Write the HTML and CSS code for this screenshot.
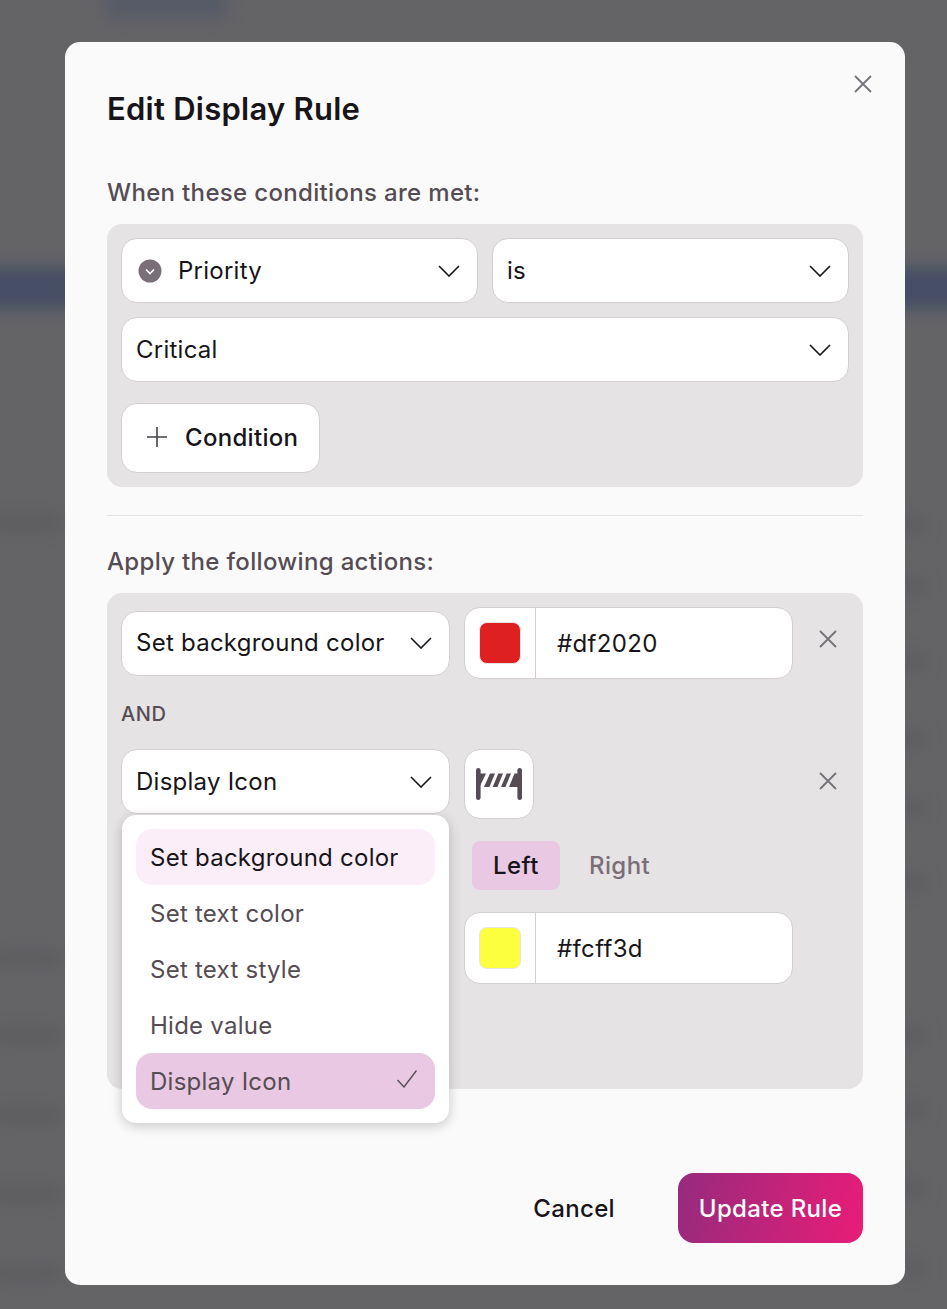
FILE: index.html
```html
<!DOCTYPE html>
<html lang="en">
<head>
<meta charset="utf-8">
<title>Edit Display Rule</title>
<link rel="stylesheet" href="styles.css">
</head>
<body>
<div class="backdrop" aria-hidden="true">
  <span class="blur blur-tab"></span>
  <span class="blur blur-band"></span>
  <span class="blur left y522"></span>
  <span class="blur left y959"></span>
  <span class="blur left y1035"></span>
  <span class="blur left y1115"></span>
  <span class="blur left y1194"></span>
  <span class="blur left y1273"></span>
  <span class="blur right y525"></span>
  <span class="blur right y586"></span>
  <span class="blur right y662"></span>
  <span class="blur right y739"></span>
  <span class="blur right y808"></span>
  <span class="blur right y882"></span>
  <span class="blur right y1035"></span>
  <span class="blur right y1110"></span>
  <span class="blur right y1189"></span>
  <span class="blur right y1268"></span>
</div>
<main class="modal">
  <button class="close" aria-label="Close">
    <svg width="20" height="20" viewBox="0 0 20 20"><path d="M2 2 18 18M18 2 2 18" class="stroke-grey"/></svg>
  </button>
  <h1 class="title">Edit Display Rule</h1>
  <h2 class="label">When these conditions are met:</h2>
  <section class="panel conditions">
    <div class="cond-row">
      <div class="select">
        <svg class="prio" width="24" height="24" viewBox="0 0 24 24"><circle cx="12" cy="12" r="11.5" fill="#7a6e78"/><path d="M8 10.5 12 14.5 16 10.5" fill="none" stroke="#fff" stroke-width="1.6"/></svg>
        <span class="grow">Priority</span>
        <svg class="chev" width="22" height="12" viewBox="0 0 22 12"><path d="M1 1 11 11 21 1"/></svg>
      </div>
      <div class="select">
        <span class="grow">is</span>
        <svg class="chev" width="22" height="12" viewBox="0 0 22 12"><path d="M1 1 11 11 21 1"/></svg>
      </div>
    </div>
    <div class="select">
      <span class="grow">Critical</span>
      <svg class="chev" width="22" height="12" viewBox="0 0 22 12"><path d="M1 1 11 11 21 1"/></svg>
    </div>
    <button class="add">
      <svg width="20" height="20" viewBox="0 0 20 20"><path d="M10 0V20M0 10H20" fill="none" stroke="#45404a" stroke-width="1.6"/></svg>
      <span>Condition</span>
    </button>
  </section>
  <hr class="rule">
  <h2 class="label">Apply the following actions:</h2>
  <section class="panel actions">
    <div class="action-row row-first">
      <div class="select">
        <span class="grow">Set background color</span>
        <svg class="chev" width="22" height="12" viewBox="0 0 22 12"><path d="M1 1 11 11 21 1"/></svg>
      </div>
      <div class="color-field">
        <span class="swatch-cell"><span class="swatch swatch-red"></span></span>
        <span class="hex">#df2020</span>
      </div>
      <button class="remove" aria-label="Remove">
        <svg width="18" height="18" viewBox="0 0 18 18"><path d="M1 1 17 17M17 1 1 17" class="stroke-grey"/></svg>
      </button>
    </div>
    <div class="and">AND</div>
    <div class="action-row row-second">
      <div class="select">
        <span class="grow">Display Icon</span>
        <svg class="chev" width="22" height="12" viewBox="0 0 22 12"><path d="M1 1 11 11 21 1"/></svg>
      </div>
      <button class="icon-btn" aria-label="Icon">
        <svg width="46" height="32" viewBox="0 0 46 32">
          <g fill="#554c54">
            <rect x="0" y="0" width="4.6" height="32" rx="2.3"/>
            <rect x="41.4" y="0" width="4.6" height="32" rx="2.3"/>
            <path d="M4 5.5H10L4 18Z"/>
            <path d="M14 5.5H19L13.4 19H8Z"/>
            <path d="M22.3 5.5H27L21.4 19H16.7Z"/>
            <path d="M30.7 5.5H35L29.4 19H25Z"/>
            <path d="M38.5 5.5H42V19H33Z"/>
          </g>
        </svg>
      </button>
      <button class="remove" aria-label="Remove">
        <svg width="18" height="18" viewBox="0 0 18 18"><path d="M1 1 17 17M17 1 1 17" class="stroke-grey"/></svg>
      </button>
    </div>
    <div class="segments">
      <span class="seg seg-on">Left</span>
      <span class="seg">Right</span>
    </div>
    <div class="color-field field-yellow">
      <span class="swatch-cell"><span class="swatch swatch-yellow"></span></span>
      <span class="hex">#fcff3d</span>
    </div>
    <ul class="menu">
      <li class="item item-hover">Set background color</li>
      <li class="item">Set text color</li>
      <li class="item">Set text style</li>
      <li class="item">Hide value</li>
      <li class="item item-selected">
        <span>Display Icon</span>
        <svg class="check" width="20" height="18" viewBox="0 0 20 18"><path d="M.5 10 7 17 19.5 .5" fill="none" stroke="#554c54" stroke-width="1.4"/></svg>
      </li>
    </ul>
  </section>
  <footer class="footer">
    <button class="cancel">Cancel</button>
    <button class="primary">Update Rule</button>
  </footer>
</main>
</body>
</html>
```

FILE: styles.css
```css
* { box-sizing: border-box; }
html, body { margin: 0; height: 1309px; overflow: hidden; }
body {
  font-family: Inter, "Liberation Sans", sans-serif;
  font-size: 24px;
  letter-spacing: .25px;
  color: #18151a;
  background: #646366;
  padding: 42px 42px 0 65px;
  position: relative;
}
.backdrop { position: absolute; inset: 0; overflow: hidden; }
.blur { position: absolute; display: block; filter: blur(8px); height: 10px; background: #5a595c; }
.left { left: -10px; width: 70px; }
.right { left: 900px; width: 24px; }
.blur-tab { left: 107px; top: -8px; width: 118px; height: 24px; background: #555a68; }
.blur-band { left: -20px; width: 990px; top: 268px; height: 40px; background: #454e66; }
.y522 { top: 517px; }
.y525 { top: 520px; }
.y586 { top: 581px; }
.y662 { top: 657px; }
.y739 { top: 734px; }
.y808 { top: 803px; }
.y882 { top: 877px; }
.y959 { top: 954px; }
.y1035 { top: 1030px; }
.y1110 { top: 1105px; }
.y1115 { top: 1110px; }
.y1189 { top: 1184px; }
.y1194 { top: 1189px; }
.y1268 { top: 1263px; }
.y1273 { top: 1268px; }

.modal {
  position: relative;
  width: 840px;
  height: 1243px;
  background: #fafafa;
  border-radius: 15px;
  padding: 42px;
}
.close, .remove, .cancel { background: none; border: 0; padding: 0; font: inherit; letter-spacing: inherit; color: inherit; }
.close { position: absolute; right: 32px; top: 32px; width: 20px; height: 20px; display: flex; }
.stroke-grey { fill: none; stroke: #77727a; stroke-width: 1.8; }
.title { margin: 0; font-size: 31px; line-height: 50px; font-weight: 600; }
.label { margin: 0; font-size: 24px; line-height: 36px; font-weight: 450; letter-spacing: .33px; color: #554c54; }
.title + .label { margin-top: 41px; }
.panel { background: #e5e3e4; border-radius: 15px; margin-top: 13px; padding: 14px; }
.conditions { display: flex; flex-direction: column; gap: 14px; height: 263px; }
.cond-row { display: flex; gap: 14px; }
.cond-row .select { flex: 1; }
.select {
  display: flex;
  align-items: center;
  height: 65px;
  padding: 0 17px 0 14px;
  background: #fff;
  border: 1px solid #d3ced3;
  border-radius: 16px;
  line-height: 1;
}
.grow { flex: 1; white-space: nowrap; }
.prio { margin-right: 16px; margin-left: 2px; }
.chev path { fill: none; stroke: #18151a; stroke-width: 1.6; }
.add {
  display: flex;
  align-items: center;
  gap: 18px;
  width: 199px;
  height: 70px;
  margin-top: 7px;
  padding: 0 0 2px 25px;
  background: #fff;
  border: 1px solid #d3ced3;
  border-radius: 16px;
  font: 450 24px Inter, sans-serif;
  letter-spacing: .3px;
  color: #18151a;
}
.rule { height: 1px; border: 0; background: #e5e3e4; margin: 28px 0 28px; }
.actions { position: relative; height: 496px; }
.action-row { display: grid; grid-template-columns: 329px 329px 42px; gap: 14px; }
.row-first { align-items: center; }
.row-second { align-items: start; }
.remove { display: flex; justify-content: center; align-items: center; height: 64px; align-self: start; }
.color-field {
  display: flex;
  align-items: center;
  height: 72px;
  background: #fff;
  border: 1px solid #d3ced3;
  border-radius: 16px;
}
.swatch-cell { display: flex; align-items: center; justify-content: center; width: 71px; height: 100%; border-right: 1px solid #d3ced3; flex: none; }
.swatch { width: 42px; height: 42px; border-radius: 8px; border: 1px solid #e5e3e4; }
.swatch-red { background: #df2020; }
.swatch-yellow { background: #fcff3d; }
.hex { padding-left: 21px; letter-spacing: .35px; }
.and { margin: 21px 0 21px; font-size: 20px; line-height: 28px; font-weight: 450; letter-spacing: .55px; color: #554c54; }
.icon-btn {
  width: 70px;
  height: 70px;
  display: flex;
  align-items: center;
  justify-content: center;
  background: #fff;
  border: 1px solid #d3ced3;
  border-radius: 16px;
  padding: 0;
}
.segments { display: flex; gap: 8px; margin: 22px 0 0 351px; }
.seg { height: 49px; padding: 0 21px; display: flex; align-items: center; justify-content: center; border-radius: 8px; font-weight: 450; letter-spacing: .45px; color: #7a6e78; }
.seg-on { background: #e8c8e2; color: #18151a; }
.field-yellow { width: 329px; margin: 22px 0 0 343px; }
.menu {
  position: absolute;
  left: 15px;
  top: 222px;
  width: 327px;
  height: 308px;
  margin: 0;
  padding: 14px;
  list-style: none;
  background: #fff;
  border-radius: 14px;
  box-shadow: 0 3px 12px rgba(30, 20, 30, .22);
}
.item { height: 56px; display: flex; align-items: center; justify-content: space-between; padding: 0 14px; border-radius: 16px; color: #554c54; white-space: nowrap; }
.item-hover { background: #fbeef8; color: #18151a; }
.item-selected { background: #e8c8e2; }
.check { margin: -4px 4px 0 0; }
.footer { display: flex; justify-content: flex-end; align-items: center; margin-top: 84px; }
.cancel { font-weight: 450; letter-spacing: .35px; color: #18151a; margin-right: 63px; }
.primary {
  width: 185px;
  height: 70px;
  border: 0;
  border-radius: 16px;
  background: linear-gradient(100deg, #962b7d, #e91c77);
  color: #fff;
  font: 450 24px Inter, sans-serif;
  letter-spacing: .33px;
}
```
